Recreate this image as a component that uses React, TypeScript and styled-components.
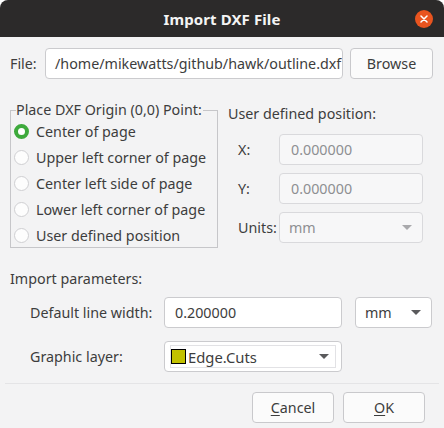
import React from "react";
import styled, { createGlobalStyle } from "styled-components";

const GlobalStyle = createGlobalStyle`
  html, body { margin: 0; padding: 0; background: #ffffff; }
  body { font-family: "Noto Sans", "Open Sans", sans-serif; font-size: 14.3px; color: #3d3d3d; }
  * { box-sizing: border-box; }
`;

const Window = styled.div`
  width: 444px;
  height: 428px;
  background: #f3f3f4;
  border-radius: 8px 8px 0 0;
  display: flex;
  flex-direction: column;
  overflow: hidden;
`;

const TitleBar = styled.div`
  height: 37px;
  flex: none;
  background: #2c2a2a;
  display: flex;
  align-items: center;
  justify-content: center;
  position: relative;
`;

const Title = styled.span`
  color: #f4f4f4;
  font-weight: bold;
  font-size: 15px;
  letter-spacing: 0.1px;
`;

const CloseButton = styled.div`
  position: absolute;
  right: 11px;
  top: 10px;
  width: 18px;
  height: 18px;
  border-radius: 50%;
  background: #e9541f;
  display: flex;
  align-items: center;
  justify-content: center;
`;

const Content = styled.div`
  flex: 1;
  display: flex;
  flex-direction: column;
  padding: 0 11px 0 10px;
`;

const FileRow = styled.div`
  display: flex;
  align-items: center;
  gap: 7px;
  margin-top: 11px;
  height: 31px;
`;

const FileLabel = styled.span`
  width: 28px;
  flex: none;
`;

const TextBox = styled.div<{ $width: number; $disabled?: boolean; $pad?: number }>`
  width: ${(p) => p.$width}px;
  height: 31px;
  flex: none;
  background: ${(p) => (p.$disabled ? "#f7f7f8" : "#ffffff")};
  border: 1px solid ${(p) => (p.$disabled ? "#d9d9dc" : "#cbcbce")};
  border-radius: 4px;
  display: flex;
  align-items: center;
  padding-left: ${(p) => p.$pad ?? 10}px;
  overflow: hidden;
  white-space: nowrap;
  color: ${(p) => (p.$disabled ? "#8e8f92" : "#3d3d3d")};
`;

const Button = styled.div<{ $width: number }>`
  width: ${(p) => p.$width}px;
  height: 31px;
  flex: none;
  background: #fbfbfb;
  border: 1px solid #c9c9cc;
  border-radius: 4px;
  display: flex;
  align-items: center;
  justify-content: center;
  color: #3d3d3d;
`;

const Middle = styled.div`
  display: flex;
  margin-top: 23px;
`;

const GroupBox = styled.fieldset`
  width: 208px;
  height: 146px;
  margin: 0;
  padding: 0 0 0 3px;
  border: 1px solid #c6c6c9;
  border-radius: 0;
  flex: none;
`;

const Legend = styled.legend`
  padding: 0 1px 0 0;
  margin-left: 2px;
  line-height: 16px;
  color: #3d3d3d;
`;

const RadioRow = styled.div`
  height: 26px;
  display: flex;
  align-items: center;
  gap: 7px;
`;

const RadioCircle = styled.span<{ $checked?: boolean }>`
  width: 15px;
  height: 15px;
  border-radius: 50%;
  flex: none;
  background: ${(p) => (p.$checked ? "#ffffff" : "#fdfdfd")};
  border: ${(p) => (p.$checked ? "4px solid #3eaa3c" : "1px solid #cfcfd2")};
`;

const RightCol = styled.div`
  margin-left: 10px;
  padding-top: 4px;
  display: flex;
  flex-direction: column;
`;

const SectionTitle = styled.div`
  line-height: 16px;
`;

const PosGrid = styled.div`
  display: grid;
  grid-template-columns: 51px 144px;
  row-gap: 8px;
  margin-top: 12px;
`;

const PosLabel = styled.span`
  padding-left: 10px;
  display: flex;
  align-items: center;
`;

const Arrow = styled.span<{ $disabled?: boolean; $right?: number }>`
  width: 0;
  height: 0;
  border-left: 5px solid transparent;
  border-right: 5px solid transparent;
  border-top: 5px solid ${(p) => (p.$disabled ? "#a9a9ac" : "#5a5a5c")};
  margin-left: auto;
  margin-right: ${(p) => p.$right ?? 0}px;
`;

const ParamsTitle = styled.div`
  margin-top: 23px;
  line-height: 16px;
`;

const ParamsGrid = styled.div`
  display: grid;
  grid-template-columns: 134px 178px 90px;
  row-gap: 13px;
  padding-left: 20px;
  margin-top: 10px;
`;

const ParamLabel = styled.span`
  display: flex;
  align-items: center;
`;

const UnitCell = styled.div`
  justify-self: end;
`;

const LayerSelect = styled.div`
  width: 178px;
  height: 31px;
  background: #ffffff;
  border: 1px solid #cbcbce;
  border-radius: 4px;
  padding: 3px 5px;
  display: flex;
`;

const LayerInner = styled.div`
  flex: 1;
  border: 1px solid #e2e2e5;
  display: flex;
  align-items: center;
  padding-right: 6px;
  color: #3d3d3d;
  font-size: 14.8px;
`;

const Swatch = styled.span<{ $color: string }>`
  width: 15px;
  height: 15px;
  background: ${(p) => p.$color};
  border: 1px solid #000;
  margin-right: 2px;
  flex: none;
`;

const Separator = styled.div`
  height: 1px;
  background: #e4e4e6;
  margin: 11px -6px 0 -5px;
`;

const ButtonRow = styled.div`
  display: flex;
  justify-content: flex-end;
  gap: 9px;
  margin-top: 8px;
  padding-right: 8px;
`;

const U = styled.span`
  text-decoration: underline;
  text-underline-offset: 2px;
`;

const radios = [
  "Center of page",
  "Upper left corner of page",
  "Center left side of page",
  "Lower left corner of page",
  "User defined position",
];

export default function App() {
  return (
    <>
      <GlobalStyle />
      <Window>
        <TitleBar>
          <Title>Import DXF File</Title>
          <CloseButton>
            <svg width="8" height="8" viewBox="0 0 8 8">
              <path d="M1 1 L7 7 M7 1 L1 7" stroke="#fff" strokeWidth="1.5" strokeLinecap="round" />
            </svg>
          </CloseButton>
        </TitleBar>
        <Content>
          <FileRow>
            <FileLabel>File:</FileLabel>
            <TextBox $width={298} $pad={9}>/home/mikewatts/github/hawk/outline.dxf</TextBox>
            <Button $width={83}>Browse</Button>
          </FileRow>
          <Middle>
            <GroupBox>
              <Legend>Place DXF Origin (0,0) Point:</Legend>
              {radios.map((r, i) => (
                <RadioRow key={r}>
                  <RadioCircle $checked={i === 0} />
                  <span>{r}</span>
                </RadioRow>
              ))}
            </GroupBox>
            <RightCol>
              <SectionTitle>User defined position:</SectionTitle>
              <PosGrid>
                <PosLabel>X:</PosLabel>
                <TextBox $width={144} $disabled $pad={11}>0.000000</TextBox>
                <PosLabel>Y:</PosLabel>
                <TextBox $width={144} $disabled $pad={11}>0.000000</TextBox>
                <PosLabel>Units:</PosLabel>
                <TextBox $width={144} $disabled $pad={9}>
                  mm
                  <Arrow $disabled $right={10} />
                </TextBox>
              </PosGrid>
            </RightCol>
          </Middle>
          <ParamsTitle>Import parameters:</ParamsTitle>
          <ParamsGrid>
            <ParamLabel>Default line width:</ParamLabel>
            <TextBox $width={178}>0.200000</TextBox>
            <UnitCell>
              <TextBox $width={77} $pad={9}>
                mm
                <Arrow $right={10} />
              </TextBox>
            </UnitCell>
            <ParamLabel>Graphic layer:</ParamLabel>
            <LayerSelect>
              <LayerInner>
                <Swatch $color="#c2c100" />
                Edge.Cuts
                <Arrow />
              </LayerInner>
            </LayerSelect>
          </ParamsGrid>
          <Separator />
          <ButtonRow>
            <Button $width={82}>
              <span>
                <U>C</U>ancel
              </span>
            </Button>
            <Button $width={82}>
              <span>
                <U>O</U>K
              </span>
            </Button>
          </ButtonRow>
        </Content>
      </Window>
    </>
  );
}
